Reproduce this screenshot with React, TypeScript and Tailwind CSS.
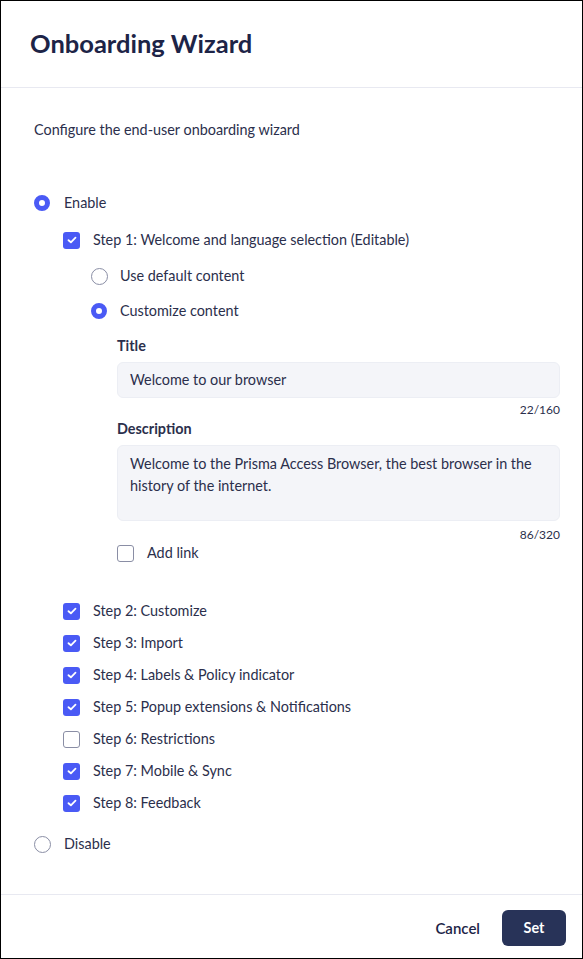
import React from "react";

function Radio({ checked }: { checked: boolean }) {
  return checked ? (
    <span className="box-border inline-block w-[16px] h-[16px] rounded-full border-[5px] border-[#4a5af5] bg-white shrink-0" />
  ) : (
    <span className="box-border inline-block w-[17px] h-[17px] rounded-full border-[1.5px] border-[#8a8ea5] bg-white shrink-0" />
  );
}

function Check({ checked }: { checked: boolean }) {
  return checked ? (
    <span className="inline-flex items-center justify-center w-[17px] h-[17px] rounded-[3px] bg-[#4a5af5] shrink-0">
      <svg width="10" height="8" viewBox="0 0 10 8" fill="none">
        <path d="M1.5 4.2 L3.9 6.3 L8.5 1.7" stroke="white" strokeWidth="1.8" strokeLinecap="round" strokeLinejoin="round" />
      </svg>
    </span>
  ) : (
    <span className="box-border inline-block w-[17px] h-[17px] rounded-[3px] border-[1.5px] border-[#8a8ea5] bg-white shrink-0" />
  );
}

const steps: [string, boolean][] = [
  ["Step 2: Customize", true],
  ["Step 3: Import", true],
  ["Step 4: Labels & Policy indicator", true],
  ["Step 5: Popup extensions & Notifications", true],
  ["Step 6: Restrictions", false],
  ["Step 7: Mobile & Sync", true],
  ["Step 8: Feedback", true],
];

export default function App() {
  return (
    <div
      className="box-border w-[583px] h-[959px] border border-black bg-white flex flex-col text-[#2b2f4c] text-[14.4px]"
      style={{ fontFamily: "Lato, 'Open Sans', sans-serif" }}
    >
      <div className="h-[87px] border-b border-[#e8e9f1] px-[29px] pt-[26px] shrink-0">
        <h1 className="text-[25.5px] leading-[32px] font-bold text-[#1d2447]">Onboarding Wizard</h1>
      </div>

      <div className="flex-1 pl-[33px] pr-[22px] pt-[32px]">
        <div className="leading-[20px]">Configure the end-user onboarding wizard</div>

        <div className="mt-[53px] h-[20px] flex items-center gap-[14px]">
          <Radio checked />
          <span>Enable</span>
        </div>

        <div className="pl-[29px]">
          <div className="mt-[17px] h-[20px] flex items-center gap-[13px]">
            <Check checked />
            <span>Step 1: Welcome and language selection (Editable)</span>
          </div>

          <div className="pl-[28px]">
            <div className="mt-[16px] h-[20px] flex items-center gap-[12px]">
              <Radio checked={false} />
              <span>Use default content</span>
            </div>
            <div className="mt-[15px] h-[20px] flex items-center gap-[13px]">
              <Radio checked />
              <span>Customize content</span>
            </div>

            <div className="pl-[26px]">
              <div className="mt-[15px] h-[20px] leading-[20px] font-bold">Title</div>
              <div className="mt-[6px] h-[36px] rounded-[6px] bg-[#f4f5f9] border border-[#eceef4] flex items-center px-[12px]">
                Welcome to our browser
              </div>
              <div className="mt-[4px] text-[12px] leading-[16px] text-right">22/160</div>
              <div className="mt-[1px] h-[20px] leading-[20px] font-bold">Description</div>
              <div className="mt-[6px] h-[76px] rounded-[6px] bg-[#f4f5f9] border border-[#eceef4] px-[12px] pt-[7px] leading-[22px]">
                Welcome to the Prisma Access Browser, the best browser in the history of the internet.
              </div>
              <div className="mt-[6px] text-[12px] leading-[16px] text-right">86/320</div>
              <div className="mt-0 h-[20px] flex items-center gap-[13px]">
                <Check checked={false} />
                <span>Add link</span>
              </div>
            </div>
          </div>

          <div className="mt-[38px] flex flex-col gap-[12px]">
            {steps.map(([label, c]) => (
              <div key={label} className="h-[20px] flex items-center gap-[13px]">
                <Check checked={c} />
                <span>{label}</span>
              </div>
            ))}
          </div>
        </div>

        <div className="mt-[21px] h-[20px] flex items-center gap-[13px]">
          <Radio checked={false} />
          <span>Disable</span>
        </div>
      </div>

      <div className="h-[64px] border-t border-[#e8e9f1] shrink-0 flex items-start justify-end pt-[15px] pr-[16px] gap-[22px]">
        <button className="h-[36px] px-[0px] font-semibold text-[15px] text-[#1d2447]">Cancel</button>
        <button className="h-[36px] w-[64px] rounded-[6px] bg-[#283358] text-white font-bold text-[14.4px]">Set</button>
      </div>
    </div>
  );
}
